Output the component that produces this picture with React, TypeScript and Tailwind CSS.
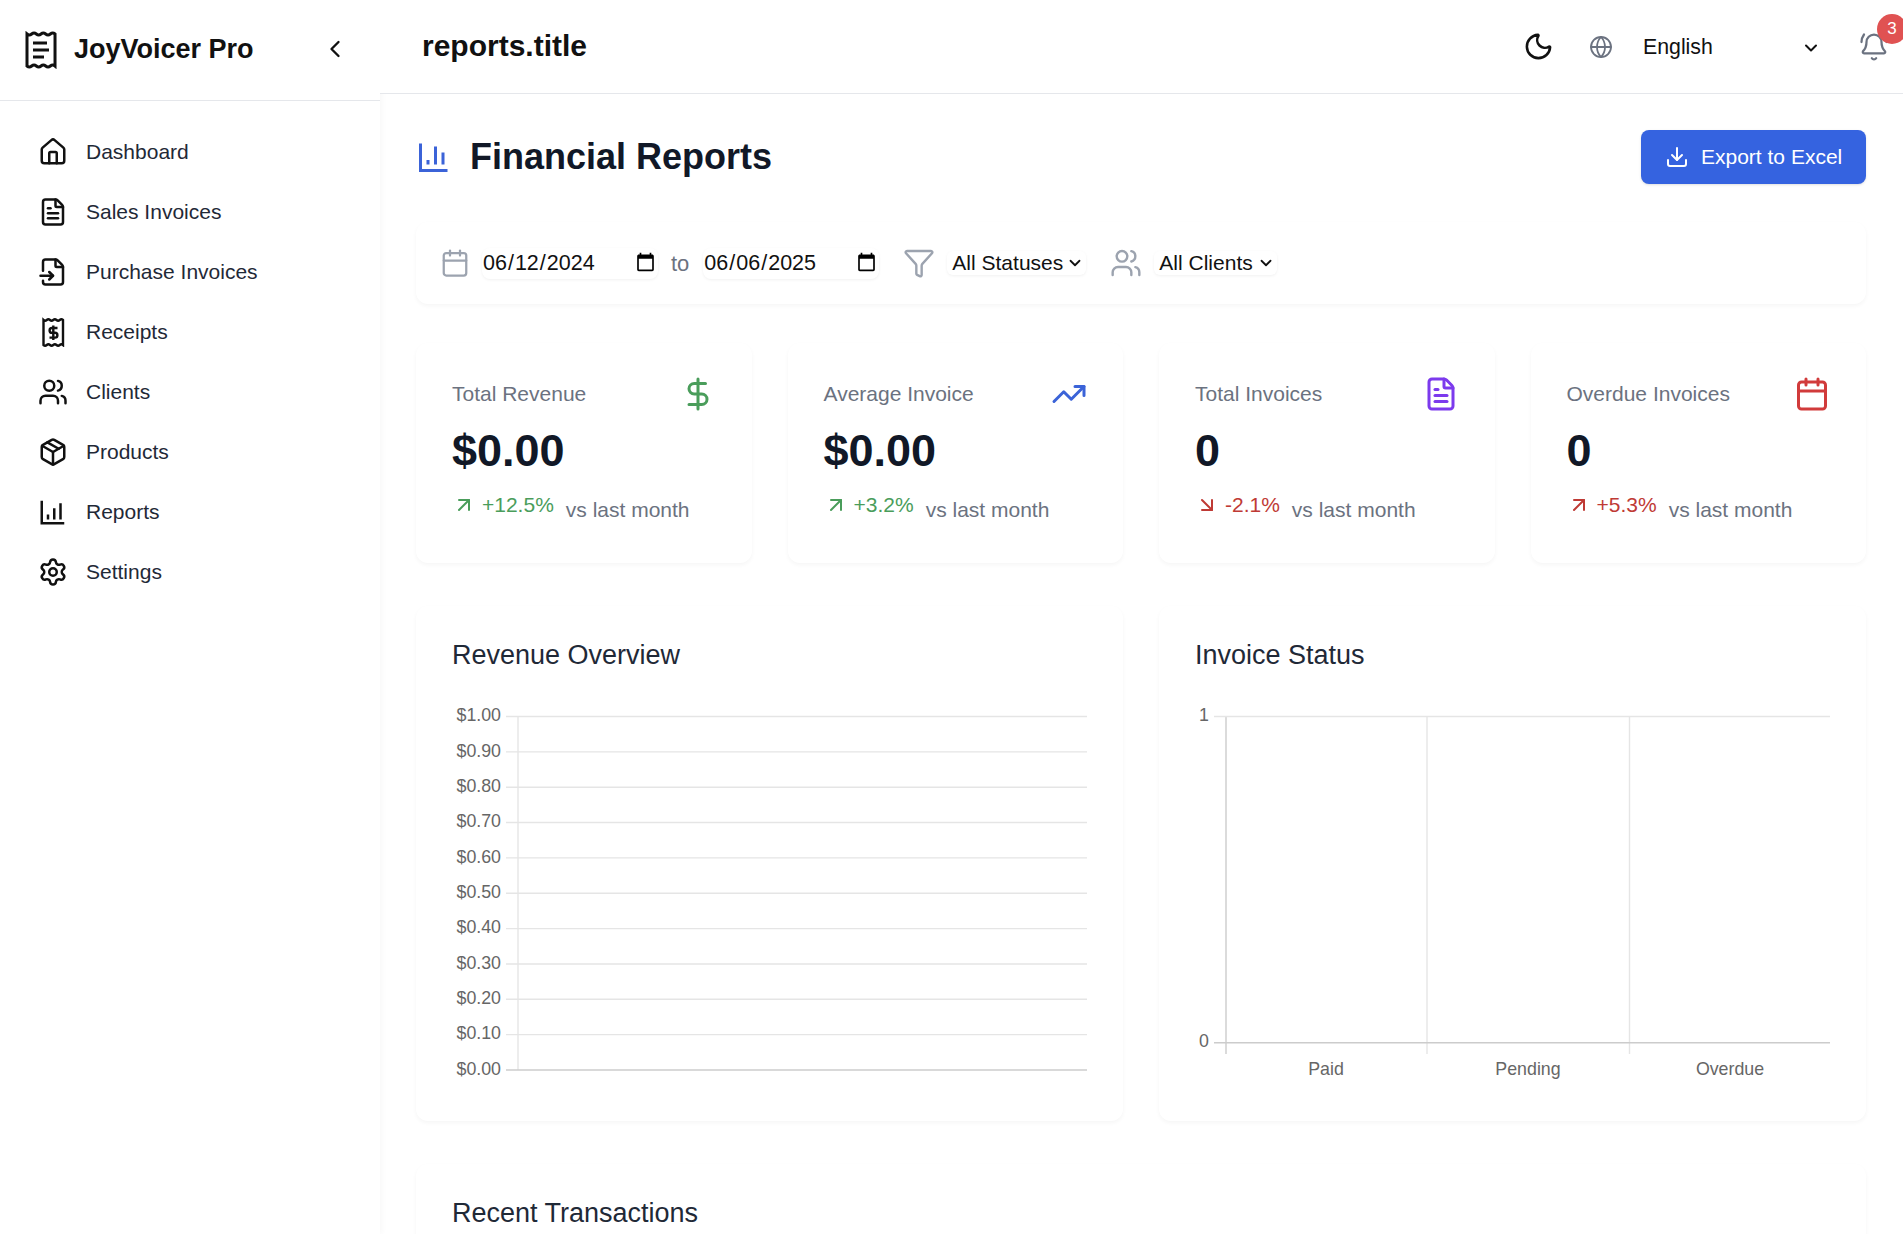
import {
  ArrowDownRight,
  ArrowUpRight,
  BellRing,
  Calendar,
  ChevronDown,
  ChevronLeft,
  DollarSign,
  Download,
  FileInput,
  FileText,
  Filter,
  Globe,
  House,
  Moon,
  Package,
  Settings,
  TrendingUp,
  Users,
} from "lucide-react";
import type { ReactNode } from "react";

function LogoIcon() {
  return (
    <svg width="32" height="38" viewBox="0 0 32 38" fill="none" stroke="#111" strokeWidth="3" className="shrink-0">
      <path d="M2 3q2.33 2 4.67 0t4.67 0t4.67 0t4.67 0t4.67 0t4.67 0V35q-2.33 -2 -4.67 0t-4.67 0t-4.67 0t-4.67 0t-4.67 0t-4.67 0Z" />
      <path d="M8 12h14M8 19h16M8 26h11" />
    </svg>
  );
}

function ReceiptDollarIcon() {
  return (
    <svg width="30" height="30" viewBox="0 0 30 30" fill="none" stroke="#111" strokeWidth="2.4" className="shrink-0">
      <path d="M5.5 3q1.6 1.4 3.25 0t3.25 0t3.25 0t3.25 0t3.25 0t3.25 0V28q-1.6 -1.4 -3.25 0t-3.25 0t-3.25 0t-3.25 0t-3.25 0t-3.25 0Z" />
      <path d="M19.5 11h-5.5a2.4 2.4 0 0 0 0 4.8h3a2.4 2.4 0 0 1 0 4.8h-5.5M15.3 8.5v14.5" strokeWidth="2.4" />
    </svg>
  );
}

function ReportsIcon() {
  return (
    <svg width="30" height="30" viewBox="0 0 24 24" fill="none" stroke="#111" strokeWidth="2" className="shrink-0">
      <path d="M3 3v18h18M8 18v-4M13 18V9M18 18V5" />
    </svg>
  );
}

function BarChartIcon() {
  return (
    <svg width="36" height="36" viewBox="0 0 24 24" fill="none" stroke="#3b63d8" strokeWidth="2" className="shrink-0">
      <path d="M3 3v18h18M8 17v-3M13 17V5M18 17V9" />
    </svg>
  );
}

const navItems: { label: string; icon: ReactNode }[] = [
  { label: "Dashboard", icon: <House size={30} /> },
  { label: "Sales Invoices", icon: <FileText size={30} /> },
  { label: "Purchase Invoices", icon: <FileInput size={30} /> },
  { label: "Receipts", icon: <ReceiptDollarIcon /> },
  { label: "Clients", icon: <Users size={30} /> },
  { label: "Products", icon: <Package size={30} /> },
  { label: "Reports", icon: <ReportsIcon /> },
  { label: "Settings", icon: <Settings size={30} /> },
];

function Sidebar() {
  return (
    <aside className="flex w-[380px] shrink-0 flex-col bg-white shadow-[2px_0_6px_rgba(0,0,0,0.03)]">
      <div className="flex h-[101px] items-center border-b border-[#e5e7eb] pl-[25px]">
        <LogoIcon />
        <span className="-mt-[2px] ml-[17px] text-[27px] font-bold text-[#111]">JoyVoicer Pro</span>
        <ChevronLeft size={28} className="-mt-[2px] ml-auto mr-[31px] text-[#111]" />
      </div>
      <nav className="flex flex-col pt-[21px]">
        {navItems.map((item) => (
          <div key={item.label} className="flex h-[60px] items-center gap-[18px] pl-[38px] text-[21px] text-[#1f2937]">
            <span className="text-[#111]">{item.icon}</span>
            {item.label}
          </div>
        ))}
      </nav>
    </aside>
  );
}

function TopBar() {
  return (
    <header className="flex h-[94px] shrink-0 items-center border-b border-[#e5e7eb] bg-white pl-[42px] pr-[14px]">
      <h1 className="-mt-[2px] text-[30px] font-bold text-[#111]">reports.title</h1>
      <Moon size={31} className="ml-auto text-[#111]" />
      <Globe size={24} className="ml-[35px] text-[#6b7280]" strokeWidth={1.8} />
      <div className="ml-[22px] flex w-[190px] items-center pl-[8px] pr-[4px] pt-[2px] text-[21.3px] text-[#111]">
        English
        <ChevronDown size={20} strokeWidth={2.4} className="ml-auto" />
      </div>
      <div className="relative ml-[34px]">
        <BellRing size={30} className="text-[#6b7280]" strokeWidth={1.8} />
        <span className="absolute -right-[18px] -top-[18px] flex h-[30px] w-[30px] items-center justify-center rounded-full bg-[#e05252] text-[17px] text-white">
          3
        </span>
      </div>
    </header>
  );
}

function DateField({ value }: { value: string }) {
  return (
    <input
      type="date"
      defaultValue={value}
      className="h-[31px] w-[176px] rounded-lg bg-white text-[21.5px] text-[#111] shadow-[0_1px_3px_rgba(0,0,0,0.06)]"
    />
  );
}

function SelectField({ label, width }: { label: string; width: string }) {
  return (
    <div className={`flex h-[24px] items-center justify-between whitespace-nowrap rounded-md bg-white pl-[5px] pr-[2px] text-[21px] text-[#111] shadow-[0_1px_3px_rgba(0,0,0,0.06)] ${width}`}>
      {label}
      <ChevronDown size={18} strokeWidth={2.4} />
    </div>
  );
}

function FilterBar() {
  return (
    <div className="mb-[39px] flex h-[82px] items-center rounded-xl bg-white pl-[24px] shadow-[0_2px_4px_rgba(0,0,0,0.04)]">
      <Calendar size={30} className="text-[#9ca3af]" strokeWidth={1.8} />
      <div className="ml-[12px] flex items-center">
        <DateField value="2024-06-12" />
        <span className="ml-[13px] mr-[14px] text-[22px] text-[#6b7280]">to</span>
        <DateField value="2025-06-06" />
      </div>
      <Filter size={32} className="ml-[24px] text-[#9ca3af]" strokeWidth={1.8} />
      <div className="ml-[12px]">
        <SelectField label="All Statuses" width="w-[139px]" />
      </div>
      <Users size={32} className="ml-[24px] text-[#9ca3af]" strokeWidth={1.8} />
      <div className="ml-[12px]">
        <SelectField label="All Clients" width="w-[123px]" />
      </div>
    </div>
  );
}

type Stat = {
  label: string;
  value: string;
  icon: ReactNode;
  change: string;
  up: boolean;
  good: boolean;
};

const stats: Stat[] = [
  { label: "Total Revenue", value: "$0.00", icon: <DollarSign size={36} className="text-[#4a9d5b]" />, change: "+12.5%", up: true, good: true },
  { label: "Average Invoice", value: "$0.00", icon: <TrendingUp size={36} className="text-[#3b63d8]" />, change: "+3.2%", up: true, good: true },
  { label: "Total Invoices", value: "0", icon: <FileText size={36} className="text-[#7c3aed]" />, change: "-2.1%", up: false, good: false },
  { label: "Overdue Invoices", value: "0", icon: <Calendar size={36} className="text-[#d13b3b]" />, change: "+5.3%", up: true, good: false },
];

function StatCard({ stat }: { stat: Stat }) {
  return (
    <div className="h-[220px] rounded-xl bg-white px-[36px] pt-[33px] shadow-[0_2px_4px_rgba(0,0,0,0.04)]">
      <div className="flex h-[36px] items-center justify-between text-[21px] text-[#6b7280]">
        {stat.label}
        {stat.icon}
      </div>
      <div className="mt-[12px] text-[45px] font-bold leading-[54px] text-[#111827]">{stat.value}</div>
      <div className="mt-[13px] flex items-start text-[21px] leading-[28px]">
        <span className={`flex items-center gap-[6px] ${stat.good ? "text-[#4a9d5b]" : "text-[#bf3a35]"}`}>
          {stat.up ? <ArrowUpRight size={24} /> : <ArrowDownRight size={24} />}
          {stat.change}
        </span>
        <span className="ml-[12px] mt-[5px] text-[#6b7280]">vs last month</span>
      </div>
    </div>
  );
}

const revenueTicks = ["$1.00", "$0.90", "$0.80", "$0.70", "$0.60", "$0.50", "$0.40", "$0.30", "$0.20", "$0.10", "$0.00"];

function RevenueChart() {
  return (
    <svg width="635" height="385" viewBox="0 0 635 385" className="block">
      <line x1="66" x2="66" y1="16.5" y2="370" stroke="#e5e5e5" strokeWidth="1.4" />
      {revenueTicks.map((tick, i) => {
        const y = 16.5 + i * 35.35;
        return (
          <g key={tick}>
            <line x1="54" x2="635" y1={y} y2={y} stroke={i === 10 ? "#cccccc" : "#e5e5e5"} strokeWidth="1.4" />
            <text x="49" y={y} textAnchor="end" dominantBaseline="middle" fontSize="17.8" fill="#666">
              {tick}
            </text>
          </g>
        );
      })}
    </svg>
  );
}

function StatusChart() {
  const cols = [
    { x: 31, color: "#cccccc" },
    { x: 232, color: "#e5e5e5" },
    { x: 434.5, color: "#e5e5e5" },
  ];
  const labels = [
    { x: 131, text: "Paid" },
    { x: 333, text: "Pending" },
    { x: 535, text: "Overdue" },
  ];
  return (
    <svg width="635" height="385" viewBox="0 0 635 385" className="block">
      {cols.map((c) => (
        <line key={c.x} x1={c.x} x2={c.x} y1="16.5" y2="354" stroke={c.color} strokeWidth="1.4" />
      ))}
      <line x1="19" x2="635" y1="16.5" y2="16.5" stroke="#e5e5e5" strokeWidth="1.4" />
      <line x1="19" x2="635" y1="342.8" y2="342.8" stroke="#cccccc" strokeWidth="1.4" />
      <text x="14" y="16.5" textAnchor="end" dominantBaseline="middle" fontSize="17.8" fill="#666">1</text>
      <text x="14" y="342" textAnchor="end" dominantBaseline="middle" fontSize="17.8" fill="#666">0</text>
      {labels.map((l) => (
        <text key={l.text} x={l.x} y="370" textAnchor="middle" dominantBaseline="middle" fontSize="17.8" fill="#666">
          {l.text}
        </text>
      ))}
    </svg>
  );
}

function ChartCard({ title, children }: { title: string; children: ReactNode }) {
  return (
    <div className="h-[515px] rounded-xl bg-white px-[36px] pt-[33px] shadow-[0_2px_4px_rgba(0,0,0,0.04)]">
      <h3 className="mb-[29px] text-[27px] leading-[32px] text-[#1f2937]">{title}</h3>
      {children}
    </div>
  );
}

export default function App() {
  return (
    <div className="flex h-screen overflow-hidden bg-white font-['Liberation_Sans',Arial,sans-serif]">
      <Sidebar />
      <main className="flex min-w-0 flex-1 flex-col">
        <TopBar />
        <div className="flex-1 overflow-hidden pl-[36px] pr-[37px] pt-[36px]">
          <div className="mb-[38px] flex h-[54px] items-center">
            <BarChartIcon />
            <h2 className="ml-[18px] text-[36px] font-bold text-[#111827]">Financial Reports</h2>
            <button className="ml-auto flex h-[54px] w-[225px] items-center gap-[12px] rounded-lg bg-[#3563e0] pl-[24px] text-[21px] text-white shadow-sm">
              <Download size={24} />
              <span>Export to Excel</span>
            </button>
          </div>
          <FilterBar />
          <div className="mb-[43px] grid grid-cols-4 gap-[36px]">
            {stats.map((s) => (
              <StatCard key={s.label} stat={s} />
            ))}
          </div>
          <div className="mb-[43px] grid grid-cols-2 gap-[36px]">
            <ChartCard title="Revenue Overview">
              <RevenueChart />
            </ChartCard>
            <ChartCard title="Invoice Status">
              <StatusChart />
            </ChartCard>
          </div>
          <div className="h-[300px] rounded-xl bg-white px-[36px] pt-[33px] shadow-[0_2px_4px_rgba(0,0,0,0.04)]">
            <h3 className="text-[27px] leading-[32px] text-[#1f2937]">Recent Transactions</h3>
          </div>
        </div>
      </main>
    </div>
  );
}
